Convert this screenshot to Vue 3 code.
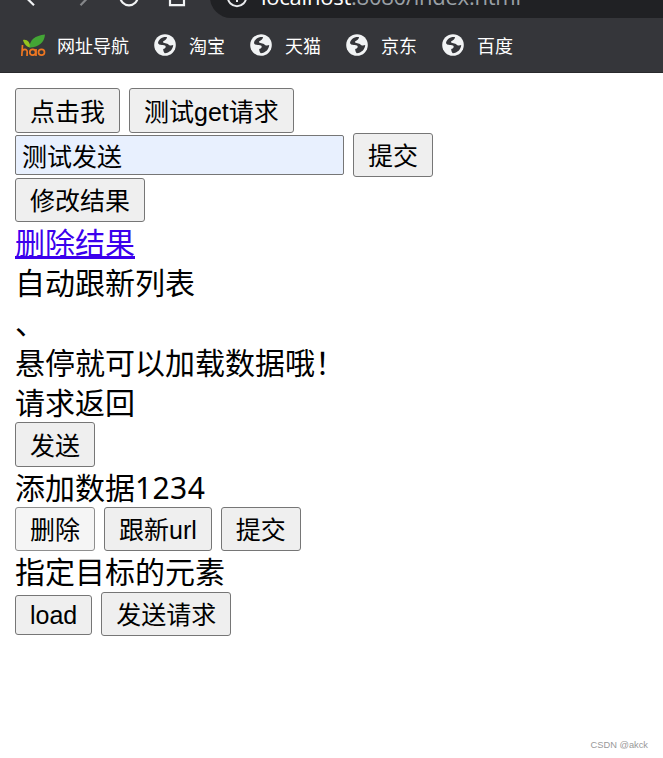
<script setup>
const bookmarks = ['淘宝', '天猫', '京东', '百度']
const lines = ['自动跟新列表', '、', '悬停就可以加载数据哦！', '请求返回']
</script>

<template>
  <div class="window">
    <header class="chrome">
      <div class="toolbar">
        <svg class="nav" width="210" height="42" viewBox="0 0 210 42" fill="none" stroke-width="2.2">
          <path d="M40 21H25M34 29.2L25 20.5L33 12" stroke="#f1f3f4" />
          <path d="M75 21H89M80.500 29.200L89 20.500L81 12" stroke="#85878a" />
          <circle cx="129" cy="20.500" r="8.800" stroke="#f1f3f4" />
          <path d="M170 19V29.200H184V19L177 12.500Z" stroke="#f1f3f4" />
        </svg>
        <div class="address">
          <svg class="info" width="22" height="22" viewBox="0 0 22 22" fill="none" stroke="#e8eaed" stroke-width="2">
            <circle cx="11" cy="11" r="9.200" />
            <path d="M11 10V16M11 6V8" />
          </svg>
          <span class="url"><span class="host">localhost</span>:8080/index.html</span>
        </div>
      </div>
      <nav class="bookmarks">
        <a class="bookmark first">
          <svg class="hao" width="26" height="24" viewBox="0 0 26 24">
            <path d="M3 7C7 6 10 9 10.500 14.500C6.500 14 4 11 3 7Z" fill="#95c51e" />
            <path d="M9.500 14.500C9.500 7 15 2.500 25 1.500C24.500 9 19 14.500 9.500 14.500Z" fill="#43a535" />
            <g fill="none" stroke="#ee7722" stroke-width="1.700">
              <path d="M2.500 12L1.800 23M2 19C2.500 15.500 7.500 15.500 7.200 19L7 23" />
              <ellipse cx="12.700" cy="19.200" rx="2.900" ry="2.900" />
              <path d="M16 16V23" />
              <ellipse cx="21.500" cy="19.200" rx="3" ry="2.900" />
            </g>
          </svg>
          <span>网址导航</span>
        </a>
        <a v-for="name in bookmarks" :key="name" class="bookmark">
          <svg width="22" height="22" viewBox="0 0 22 22">
            <circle cx="11" cy="11" r="10.800" fill="#f1f3f4" />
            <path d="M13 3C8 2.500 4.500 5.300 4 9C4.800 11.500 8 10.900 11 11.500C12.500 12.500 11.500 14.500 9.200 15C9.200 17 9.800 18.300 10.800 19.200C15.500 18.800 18.900 15.500 19.200 11C17.500 11.800 15 11.500 14.500 10.500C13.500 8.900 9 9.500 9 8C9.200 6.500 12.700 6.500 13 3Z" fill="#35363a" />
          </svg>
          <span>{{ name }}</span>
        </a>
      </nav>
    </header>

    <main class="page">
      <div class="row tall"><button>点击我</button><button>测试get请求</button></div>
      <div class="row"><input type="text" value="测试发送" /><button>提交</button></div>
      <div class="row edit"><button>修改结果</button></div>
      <div class="line"><a class="link">删除结果</a></div>
      <div v-for="text in lines" :key="text" class="line">{{ text }}</div>
      <div class="row tall"><button>发送</button></div>
      <div class="line">添加数据<span class="digits">1234</span></div>
      <div class="row"><button class="active">删除</button><button>跟新url</button><button>提交</button></div>
      <div class="line target">指定目标的元素</div>
      <div class="row"><button class="short">load</button><button>发送请求</button></div>
    </main>
    <footer class="watermark">CSDN @akck</footer>
  </div>
</template>

<style>
body { background: #fff; }
</style>

<style scoped>
.window {
  height: 758px;
  overflow: hidden;
  display: flex;
  flex-direction: column;
  font-family: "Liberation Sans", "Noto Sans CJK SC", sans-serif;
  color: #000;
}
.chrome {
  height: 73px;
  flex: none;
  box-sizing: border-box;
  overflow: hidden;
  background: #35363a;
  border-bottom: 1px solid #29292c;
}
.toolbar { display: flex; height: 42px; margin-top: -24px; }
.nav { flex: none; }
.address {
  flex: 1;
  display: flex;
  align-items: center;
  gap: 13px;
  padding-left: 16px;
  border-radius: 21px 0 0 21px;
  background: #202124;
}
.url {
  padding-bottom: 2px;
  font: 22px/30px "Open Sans", sans-serif;
  letter-spacing: -0.24px;
  color: #9aa0a6;
  white-space: nowrap;
}
.host { color: #fff; }
.bookmarks {
  display: flex;
  align-items: center;
  gap: 25px;
  height: 54px;
  padding-left: 20px;
}
.bookmark {
  display: flex;
  align-items: center;
  gap: 13px;
  color: #fff;
  font: 18px/24px "Noto Sans CJK SC", sans-serif;
}
.bookmark.first { gap: 11px; }
.page { padding: 15px 15px 0; }
.row { display: flex; align-items: center; gap: 9px; height: 44px; }
.row.tall { height: 45px; }
.row.edit { margin-top: 1px; }
button {
  height: 100%;
  box-sizing: border-box;
  margin: 0;
  padding: 2px 14px 0;
  border: 1px solid #767676;
  border-radius: 3px;
  background: #efefef;
  color: #000;
  font: 25px/34px "Liberation Sans", "Noto Sans CJK SC", sans-serif;
  white-space: nowrap;
}
button.active { background: #f5f5f5; border-color: #8f8f8f; }
button.short { height: 40px; margin-top: 2px; padding-top: 0; }
input {
  width: 329px;
  height: 40px;
  box-sizing: border-box;
  margin: 0;
  padding: 0 6px;
  border: 1px solid #767676;
  border-radius: 2px;
  background: #e8f0fe;
  color: #000;
  font: 25px/34px "Liberation Sans", "Noto Sans CJK SC", sans-serif;
}
.line {
  height: 40px;
  font: 30px/38px "Noto Sans CJK SC", sans-serif;
  white-space: nowrap;
}
.line.target { height: 41px; }
.link { color: #3b00ed; text-decoration: underline; text-decoration-thickness: 3px; text-underline-offset: 2px; }
.digits { font-family: "Noto Sans", sans-serif; letter-spacing: 0.4px; }
.watermark {
  margin-top: auto;
  padding: 0 15px 7px 0;
  text-align: right;
  font-size: 9.3px;
  line-height: 12px;
  color: #999;
}
</style>
